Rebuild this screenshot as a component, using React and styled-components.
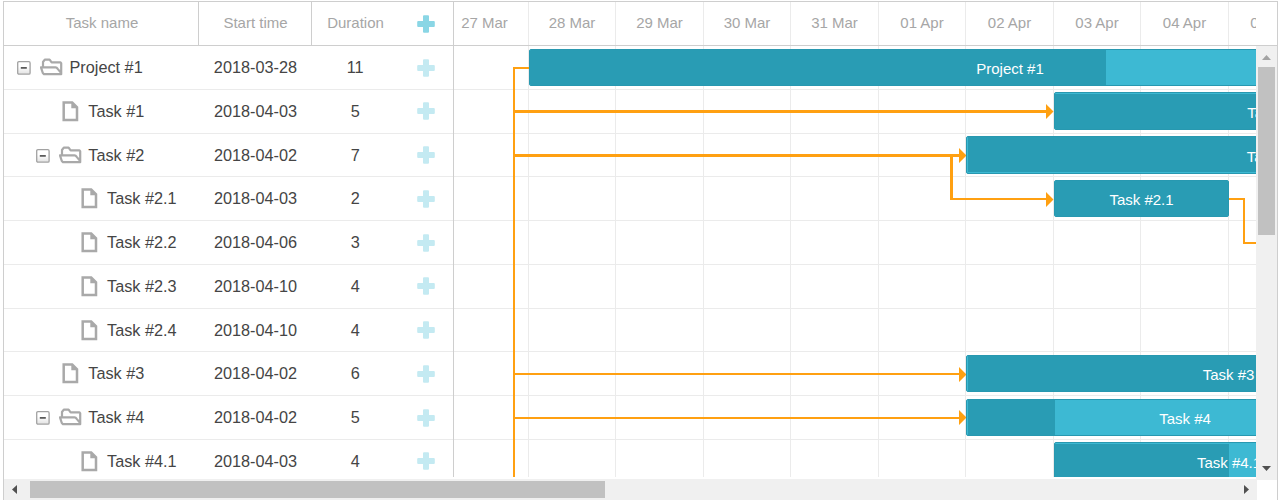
import React from "react";
import styled, { createGlobalStyle } from "styled-components";

const GlobalStyle = createGlobalStyle`
  * { box-sizing: border-box; }
  body {
    margin: 0;
    background: #fff;
    font-family: "Liberation Sans", Arial, sans-serif;
    overflow: hidden;
  }
`;

const Frame = styled.div`
  width: 1275px;
  height: 499px;
  margin: 1px 0 0 3px;
  border: 1px solid #cecece;
  border-bottom: 0;
  display: flex;
  flex-direction: column;
  overflow: hidden;
`;

const Main = styled.div`
  display: flex;
  height: 475px;
  flex: none;
`;

const Grid = styled.div`
  width: 450px;
  flex: none;
  border-right: 1px solid #cecece;
`;

const HeadRow = styled.div`
  display: flex;
  height: 44px;
  border-bottom: 1px solid #cecece;
  color: #a6a6a6;
  font-size: 15px;
  line-height: 42px;
`;

const HeadCell = styled.div`
  width: ${(p) => p.$w}px;
  flex: none;
  text-align: center;
  padding-left: ${(p) => p.$pad || 0}px;
  border-right: ${(p) => (p.$line ? "1px solid #cecece" : "0")};
`;

const Rows = styled.div`
  height: 431px;
  overflow: hidden;
`;

const Row = styled.div`
  display: flex;
  height: ${(p) => p.$h}px;
  border-bottom: 1px solid #ebebeb;
  color: #454545;
  font-size: 16.25px;
  line-height: 43px;
`;

const NameCell = styled.div`
  width: 195px;
  height: 43px;
  display: flex;
  align-items: center;
  padding-left: ${(p) => 13 + p.$level * 18.75}px;
`;

const ToggleSlot = styled.span`
  width: 14px;
  height: 13px;
  margin-right: 9px;
  display: flex;
`;

const IconSlot = styled.span`
  width: 23px;
  height: 21px;
  margin-right: 6.5px;
  display: flex;
  align-items: center;
  justify-content: center;
`;

const Cell = styled.div`
  width: ${(p) => p.$w}px;
  padding-left: 1px;
  text-align: center;
  white-space: nowrap;
`;

const AddCell = styled.div`
  width: 55px;
  line-height: 0;
  padding: ${(p) => p.$top}px 0 0 ${(p) => (p.$head ? 18 : 19)}px;
`;

const Chart = styled.div`
  flex: 1;
  min-width: 0;
  display: flex;
  flex-direction: column;
`;

const Scale = styled(HeadRow)`
  padding-right: 21px;
  flex: none;
`;

const Clip = styled.div`
  flex: 1;
  min-width: 0;
  overflow: hidden;
`;

const Strip = styled.div`
  display: flex;
  height: 100%;
  margin-left: -13px;
`;

const Day = styled.div`
  width: ${(p) => p.$w}px;
  flex: none;
  text-align: center;
  border-right: 1px solid #ebebeb;
`;

const ChartBody = styled.div`
  display: flex;
  height: 434px;
`;

const Canvas = styled.div`
  position: relative;
  width: 802px;
  height: 431px;
  overflow: hidden;
`;

const ChartRow = styled.div`
  height: ${(p) => p.$h}px;
  border-bottom: 1px solid #ebebeb;
  overflow: hidden;
`;

const Links = styled.svg`
  position: absolute;
  left: 0;
  top: 0;
  fill: #ffa011;
`;

const Bar = styled.div`
  position: absolute;
  left: ${(p) => p.$x}px;
  top: ${(p) => p.$y}px;
  width: ${(p) => p.$w}px;
  height: ${(p) => p.$h || 37}px;
  background: #3db9d3;
  border: 1px solid #2898b0;
  border-radius: 2px;
  color: #fff;
  font-size: 15px;
  line-height: ${(p) => (p.$h ? 39 : 37)}px;
  text-align: center;
  overflow: hidden;
`;

const Progress = styled.div`
  position: absolute;
  left: ${(p) => p.$l || 0}px;
  top: ${(p) => p.$t || 0}px;
  bottom: ${(p) => p.$b || 0}px;
  width: ${(p) => p.$w}px;
  background: #299cb4;
`;

const BarText = styled.span`
  position: relative;
`;

const VScroll = styled.div`
  width: 21px;
  height: 434px;
  flex: none;
  background: #f0f0f0;
  display: flex;
  flex-direction: column;
  align-items: center;
  padding: 9px 2px 9px 0;
`;

const VThumb = styled.div`
  width: 17px;
  height: 168px;
  margin: 7px 0 auto 2px;
  background: #c1c1c1;
`;

const HScroll = styled.div`
  width: 1253px;
  height: 21px;
  margin-top: 2px;
  background: #f0f0f0;
  display: flex;
  align-items: center;
  padding: 0 8px;
`;

const HThumb = styled.div`
  width: 575px;
  height: 17px;
  margin: 0 auto 0 13px;
  background: #c1c1c1;
`;

const Arrow = styled.svg`
  display: block;
  flex: none;
  margin-left: ${(p) => p.$ml || 0}px;
`;

const Plus = ({ color }) => (
  <svg width="18" height="18" viewBox="0 0 18 18">
    <path d="M6 1.2Q6 .2 7 .2H11Q12 .2 12 1.2V6H16.8Q17.8 6 17.8 7V11Q17.8 12 16.8 12H12V16.8Q12 17.8 11 17.8H7Q6 17.8 6 16.8V12H1.2Q.2 12 .2 11V7Q.2 6 1.2 6H6Z" fill={color} />
  </svg>
);

const Toggle = () => (
  <svg width="14" height="14" viewBox="0 0 14 14">
    <defs>
      <linearGradient id="toggleFill" x1="0" y1="0" x2="0" y2="1">
        <stop offset="0.4" stopColor="#fff" />
        <stop offset="1" stopColor="#e2e2e2" />
      </linearGradient>
    </defs>
    <rect x="0.7" y="0.7" width="12.4" height="12.4" rx="1.2" fill="url(#toggleFill)" stroke="#a2a2a2" strokeWidth="1.3" />
    <rect x="3.8" y="6.1" width="6" height="1.6" fill="#4a4a4a" />
  </svg>
);

const Folder = () => (
  <svg width="23" height="19" viewBox="0 0 23 19" fill="none" stroke="#a9a9a9" strokeWidth="2.2" strokeLinejoin="round">
    <path d="M3 8.5V4L4.8 1.6H9.6L11.6 4.4H20.4L21.2 5.2V16.2H4L2.8 15L1 9.4H15.6Q16.8 9.4 17.5 10.6L20.6 14.4" />
  </svg>
);

const File = () => (
  <svg width="17" height="21" viewBox="0 0 17 21">
    <path d="M1.7 1.4H10.2L15 6.2V18.9H1.7Z" fill="none" stroke="#a9a9a9" strokeWidth="2.5" />
    <path d="M9.3 .8L15.6 7.2H9.3Z" fill="#a9a9a9" />
  </svg>
);

const tasks = [
  { name: "Project #1", start: "2018-03-28", days: 11, level: 0, parent: true, h: 44, plus: 13 },
  { name: "Task #1", start: "2018-04-03", days: 5, level: 1, h: 44, plus: 12 },
  { name: "Task #2", start: "2018-04-02", days: 7, level: 1, parent: true, h: 43, plus: 12 },
  { name: "Task #2.1", start: "2018-04-03", days: 2, level: 2, h: 44, plus: 13 },
  { name: "Task #2.2", start: "2018-04-06", days: 3, level: 2, h: 44, plus: 13 },
  { name: "Task #2.3", start: "2018-04-10", days: 4, level: 2, h: 44, plus: 12 },
  { name: "Task #2.4", start: "2018-04-10", days: 4, level: 2, h: 43, plus: 12 },
  { name: "Task #3", start: "2018-04-02", days: 6, level: 1, h: 44, plus: 13 },
  { name: "Task #4", start: "2018-04-02", days: 5, level: 1, parent: true, h: 44, plus: 13 },
  { name: "Task #4.1", start: "2018-04-03", days: 4, level: 2, h: 44, plus: 12 },
];

const days = ["27 Mar", "28 Mar", "29 Mar", "30 Mar", "31 Mar", "01 Apr", "02 Apr", "03 Apr", "04 Apr", "05 Apr"];
const dayWidth = (i) => (i % 2 ? 87 : 88);

const bars = [
  { name: "Project #1", x: 75, y: 3, w: 962, progress: 576 },
  { name: "Task #1", x: 600, y: 46, w: 438, h: 38, progress: 436, t: 1 },
  { name: "Task #2", x: 512, y: 90, w: 613, h: 38, progress: 612, l: 1, b: 1 },
  { name: "Task #2.1", x: 600, y: 134, w: 175, progress: 173 },
  { name: "Task #3", x: 512, y: 309, w: 525, progress: 524, l: 1 },
  { name: "Task #4", x: 512, y: 353, w: 438, progress: 87, l: 1 },
  { name: "Task #4.1", x: 600, y: 396, w: 350, h: 38, progress: 174, t: 1 },
];

export default function App() {
  return (
    <>
      <GlobalStyle />
      <Frame>
        <Main>
          <Grid>
            <HeadRow>
              <HeadCell $w={195} $line $pad={2}>Task name</HeadCell>
              <HeadCell $w={113} $line $pad={1}>Start time</HeadCell>
              <HeadCell $w={87}>Duration</HeadCell>
              <AddCell $head $top={13}><Plus color="#8ad6e5" /></AddCell>
            </HeadRow>
            <Rows>
              {tasks.map((t) => (
                <Row key={t.name} $h={t.h}>
                  <NameCell $level={t.level}>
                    <ToggleSlot>{t.parent && <Toggle />}</ToggleSlot>
                    <IconSlot>{t.parent ? <Folder /> : <File />}</IconSlot>
                    {t.name}
                  </NameCell>
                  <Cell $w={113}>{t.start}</Cell>
                  <Cell $w={87}>{t.days}</Cell>
                  <AddCell $top={t.plus}><Plus color="#c4eaf2" /></AddCell>
                </Row>
              ))}
            </Rows>
          </Grid>
          <Chart>
            <Scale>
              <Clip>
                <Strip>
                  {days.map((d, i) => <Day key={d} $w={dayWidth(i)}>{d}</Day>)}
                </Strip>
              </Clip>
            </Scale>
            <ChartBody>
              <Canvas>
                {tasks.map((t) => (
                  <ChartRow key={t.name} $h={t.h}>
                    <Strip>
                      {days.map((d, i) => <Day key={d} $w={dayWidth(i)} />)}
                    </Strip>
                  </ChartRow>
                ))}
                <Links width="802" height="431">
                  <path d="M59 21H75V23H61V431H59Z" />
                  <path d="M61 64H592V58L599.5 65.5L592 73V67H61Z" />
                  <path d="M61 108H505V102L512.5 109.5L505 117V111H61Z" />
                  <path d="M496 110H499V152H592V146L599.5 153.5L592 161V154H496Z" />
                  <path d="M775 152H791V196H802V198H789V154H775Z" />
                  <path d="M61 327H505V321L512.5 328.5L505 336V329H61Z" />
                  <path d="M61 371H505V364L512.5 371.5L505 379V373H61Z" />
                </Links>
                {bars.map((b) => (
                  <Bar key={b.name} $x={b.x} $y={b.y} $w={b.w} $h={b.h}>
                    <Progress $w={b.progress} $l={b.l} $t={b.t} $b={b.b} />
                    <BarText>{b.name}</BarText>
                  </Bar>
                ))}
              </Canvas>
              <VScroll>
                <Arrow width="9" height="5" $ml={2}><path d="M0 5L4.5 0L9 5Z" fill="#a3a3a3" /></Arrow>
                <VThumb />
                <Arrow width="9" height="5" $ml={2}><path d="M0 0L4.5 5L9 0Z" fill="#505050" /></Arrow>
              </VScroll>
            </ChartBody>
          </Chart>
        </Main>
        <HScroll>
          <Arrow width="5" height="9"><path d="M5 0L0 4.5L5 9Z" fill="#505050" /></Arrow>
          <HThumb />
          <Arrow width="5" height="9"><path d="M0 0L5 4.5L0 9Z" fill="#505050" /></Arrow>
        </HScroll>
      </Frame>
    </>
  );
}
